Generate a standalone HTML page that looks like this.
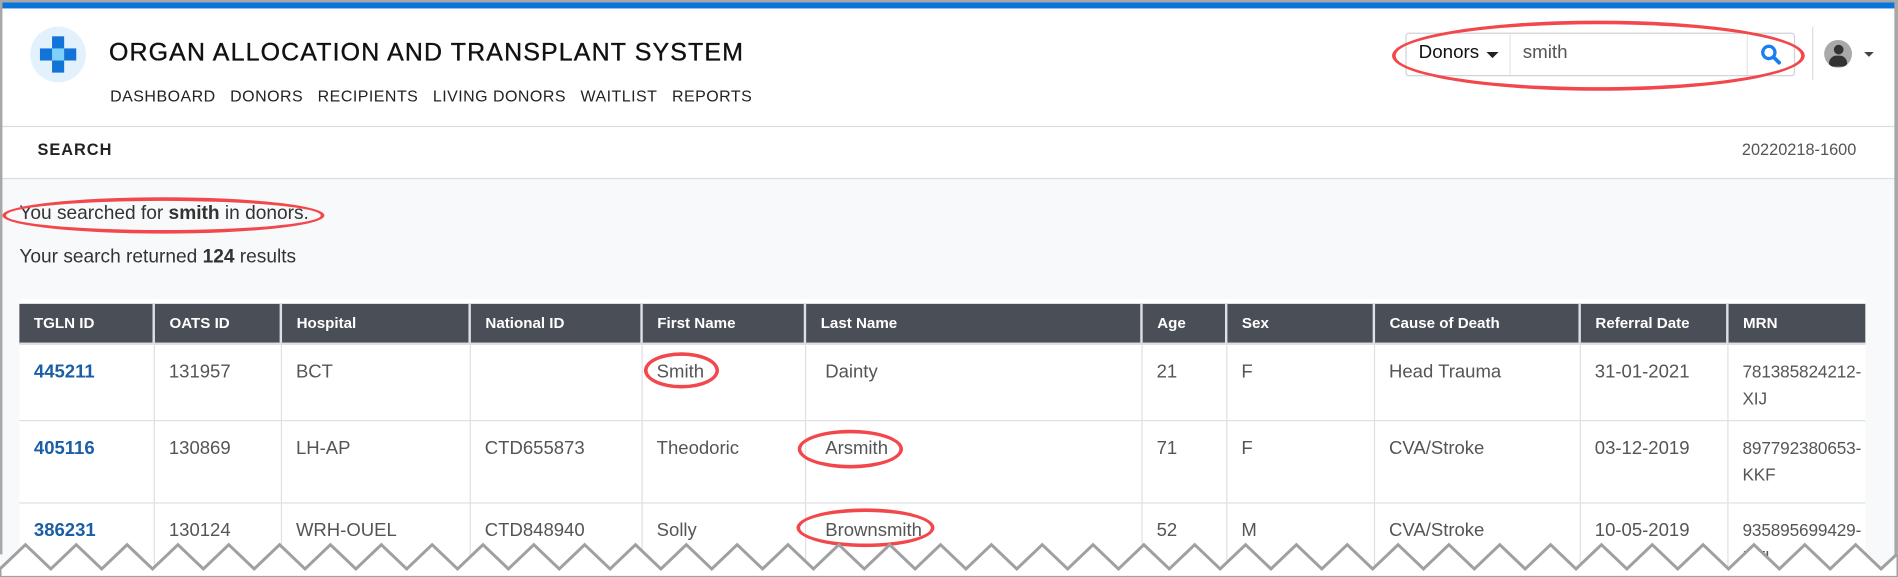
<!DOCTYPE html>
<html><head><meta charset="utf-8"><style>
*{box-sizing:border-box;margin:0;padding:0}
html,body{width:1898px;height:577px;overflow:hidden;background:#fff}
#w{position:absolute;left:0;top:0;width:1568px;height:477px;transform:scale(1.21046);transform-origin:0 0;font-family:"Liberation Sans",sans-serif;background:#f8f9fa;overflow:hidden}
.a{position:absolute}
.hdr{left:0;top:0;width:1568px;height:148px;background:#fff}
.title{left:90px;top:32px;font-size:20.6px;letter-spacing:0.95px;color:#111;white-space:nowrap;-webkit-text-stroke:0.3px #111}
.nav{left:91px;top:72px;font-size:13.2px;color:#222;letter-spacing:0.4px;white-space:nowrap}
.nav span{margin-right:12px}
table{position:absolute;left:16px;top:251px;width:1525px;table-layout:fixed;border-collapse:collapse;font-size:15.3px;color:#555;background:#fff}
th{background:#4a4f57;color:#fff;text-align:left;font-size:12.5px;font-weight:bold;height:33px;padding:0 12px;border-right:2px solid #dde0e6;border-bottom:2px solid #dde0e6}
td{vertical-align:top;padding:12px 8px 0 12px;line-height:22px;border-right:1px solid #dde0e6;border-bottom:1.5px solid #dde0e6;white-space:nowrap;overflow:hidden}
td a{color:#1a5ea6;font-weight:bold}
td.m{border-right:0;padding:12px 0 0 12px;font-size:14.2px;letter-spacing:-0.1px}
.ell{position:absolute;border:3px solid #f2474b;border-radius:50%}
</style></head><body><div id="w">
<div class="a" style="left:0;top:0;width:1568px;height:2px;background:#a8a8a8"></div>
<div class="a" style="left:0;top:2px;width:1568px;height:5px;background:#0a74d9"></div>
<div class="a hdr" style="top:7px;height:141px"></div>
<div class="a" style="left:0;top:104px;width:1568px;height:1px;background:#dcdcdc"></div>
<div class="a" style="left:0;top:147px;width:1568px;height:1px;background:#dcdde2"></div>
<div class="a" style="left:25px;top:22px;width:46px;height:46px;border-radius:50%;background:#e3f1fd"></div>
<div class="a" style="left:43px;top:30px;width:10px;height:30px;background:#1274d8"></div>
<div class="a" style="left:33px;top:40px;width:30px;height:10px;background:#1274d8"></div>
<div class="a" style="left:43px;top:40px;width:10px;height:10px;background:#7fd0fb"></div>
<div class="a title">ORGAN ALLOCATION AND TRANSPLANT SYSTEM</div>
<div class="a nav"><span>DASHBOARD</span><span>DONORS</span><span>RECIPIENTS</span><span>LIVING DONORS</span><span>WAITLIST</span><span>REPORTS</span></div>
<div class="a" style="left:1161px;top:27px;width:322px;height:36px;border:1px solid #d0d3d8;border-radius:3px;background:#fff"></div>
<div class="a" style="left:1247px;top:28px;width:1px;height:34px;background:#e6e6e6"></div>
<div class="a" style="left:1443px;top:28px;width:1px;height:34px;background:#e6e6e6"></div>
<div class="a" style="left:1172px;top:35px;font-size:15.5px;color:#111">Donors</div>
<div class="a" style="left:1228px;top:43px;border-left:5px solid transparent;border-right:5px solid transparent;border-top:5px solid #222"></div>
<div class="a" style="left:1258px;top:35px;font-size:15.5px;color:#555">smith</div>
<svg class="a" style="left:1454px;top:36px" width="18" height="18" viewBox="0 0 16 16"><circle cx="6.5" cy="6.5" r="4.5" fill="none" stroke="#1a7ef0" stroke-width="2.4"/><path d="M10 10 L14 14" stroke="#1a7ef0" stroke-width="2.8" stroke-linecap="round"/></svg>
<div class="ell" style="left:1150px;top:17px;width:341px;height:58px"></div>
<div class="a" style="left:1497px;top:22px;width:1px;height:44px;background:#ddd"></div>
<div class="a" style="left:1507px;top:33px;width:23px;height:23px;border-radius:50%;background:#a8a9ab;overflow:hidden"><div class="a" style="left:7.5px;top:4px;width:8px;height:8px;border-radius:50%;background:#333"></div><div class="a" style="left:4px;top:13px;width:15px;height:9px;border-radius:7px 7px 3px 3px;background:#333"></div></div>
<div class="a" style="left:1540px;top:43px;border-left:4px solid transparent;border-right:4px solid transparent;border-top:4px solid #444"></div>
<div class="a" style="left:31px;top:116px;font-size:13.5px;letter-spacing:0.8px;color:#222;font-weight:bold">SEARCH</div>
<div class="a" style="left:1439px;top:116px;font-size:13.5px;color:#555">20220218-1600</div>
<div class="a" style="left:16px;top:168px;font-size:15.8px;color:#333">You searched for <b>smith</b> in donors.</div>
<div class="ell" style="left:2px;top:163px;width:266px;height:30px"></div>
<div class="a" style="left:16px;top:204px;font-size:15.8px;color:#333">Your search returned <b>124</b> results</div>
<div class="a" style="left:16px;top:247px;width:1525px;height:6px;background:#fff;border-radius:3px"></div>
<table>
<colgroup><col style="width:111px"><col style="width:105px"><col style="width:156px"><col style="width:142px"><col style="width:135px"><col style="width:278px"><col style="width:70px"><col style="width:122px"><col style="width:170px"><col style="width:122px"><col style="width:114px"></colgroup>
<tr><th>TGLN ID</th><th>OATS ID</th><th>Hospital</th><th>National ID</th><th>First Name</th><th>Last Name</th><th>Age</th><th>Sex</th><th>Cause of Death</th><th>Referral Date</th><th style="border-right:0">MRN</th></tr>
<tr style="height:63px"><td><a>445211</a></td><td>131957</td><td>BCT</td><td></td><td>Smith</td><td>&nbsp;Dainty</td><td>21</td><td>F</td><td>Head Trauma</td><td>31-01-2021</td><td class="m">781385824212-<br>XIJ</td></tr>
<tr style="height:68px"><td><a>405116</a></td><td>130869</td><td>LH-AP</td><td>CTD655873</td><td>Theodoric</td><td>&nbsp;Arsmith</td><td>71</td><td>F</td><td>CVA/Stroke</td><td>03-12-2019</td><td class="m">897792380653-<br>KKF</td></tr>
<tr style="height:68px"><td><a>386231</a></td><td>130124</td><td>WRH-OUEL</td><td>CTD848940</td><td>Solly</td><td>&nbsp;Brownsmith</td><td>52</td><td>M</td><td>CVA/Stroke</td><td>10-05-2019</td><td class="m">935895699429-<br>DTL</td></tr>
</table>
<div class="ell" style="left:532px;top:291px;width:62px;height:30px"></div>
<div class="ell" style="left:659px;top:355px;width:87px;height:32px"></div>
<div class="ell" style="left:658px;top:420px;width:114px;height:32px"></div>
<svg class="a" style="left:0;top:0" width="1568" height="477"><path d="M0 477 L0 470 L21 450 L42 470 L63 450 L84 470 L105 450 L126 470 L147 450 L168 470 L189 450 L210 470 L231 450 L252 470 L273 450 L294 470 L315 450 L336 470 L357 450 L378 470 L399 450 L420 470 L441 450 L462 470 L483 450 L504 470 L525 450 L546 470 L567 450 L588 470 L609 450 L630 470 L651 450 L672 470 L693 450 L714 470 L735 450 L756 470 L777 450 L798 470 L819 450 L840 470 L861 450 L882 470 L903 450 L924 470 L945 450 L966 470 L987 450 L1008 470 L1029 450 L1050 470 L1071 450 L1092 470 L1113 450 L1134 470 L1155 450 L1176 470 L1197 450 L1218 470 L1239 450 L1260 470 L1281 450 L1302 470 L1323 450 L1344 470 L1365 450 L1386 470 L1407 450 L1428 470 L1449 450 L1470 470 L1491 450 L1512 470 L1533 450 L1554 470 L1568 457 L1568 477 Z" fill="#fff" stroke="#a0a0a0" stroke-width="2.5"/></svg>
<div class="a" style="left:0;top:0;width:2px;height:458px;background:#a8a8a8"></div>
<div class="a" style="left:1565px;top:0;width:3px;height:458px;background:#a8a8a8"></div>
</div></body></html>
